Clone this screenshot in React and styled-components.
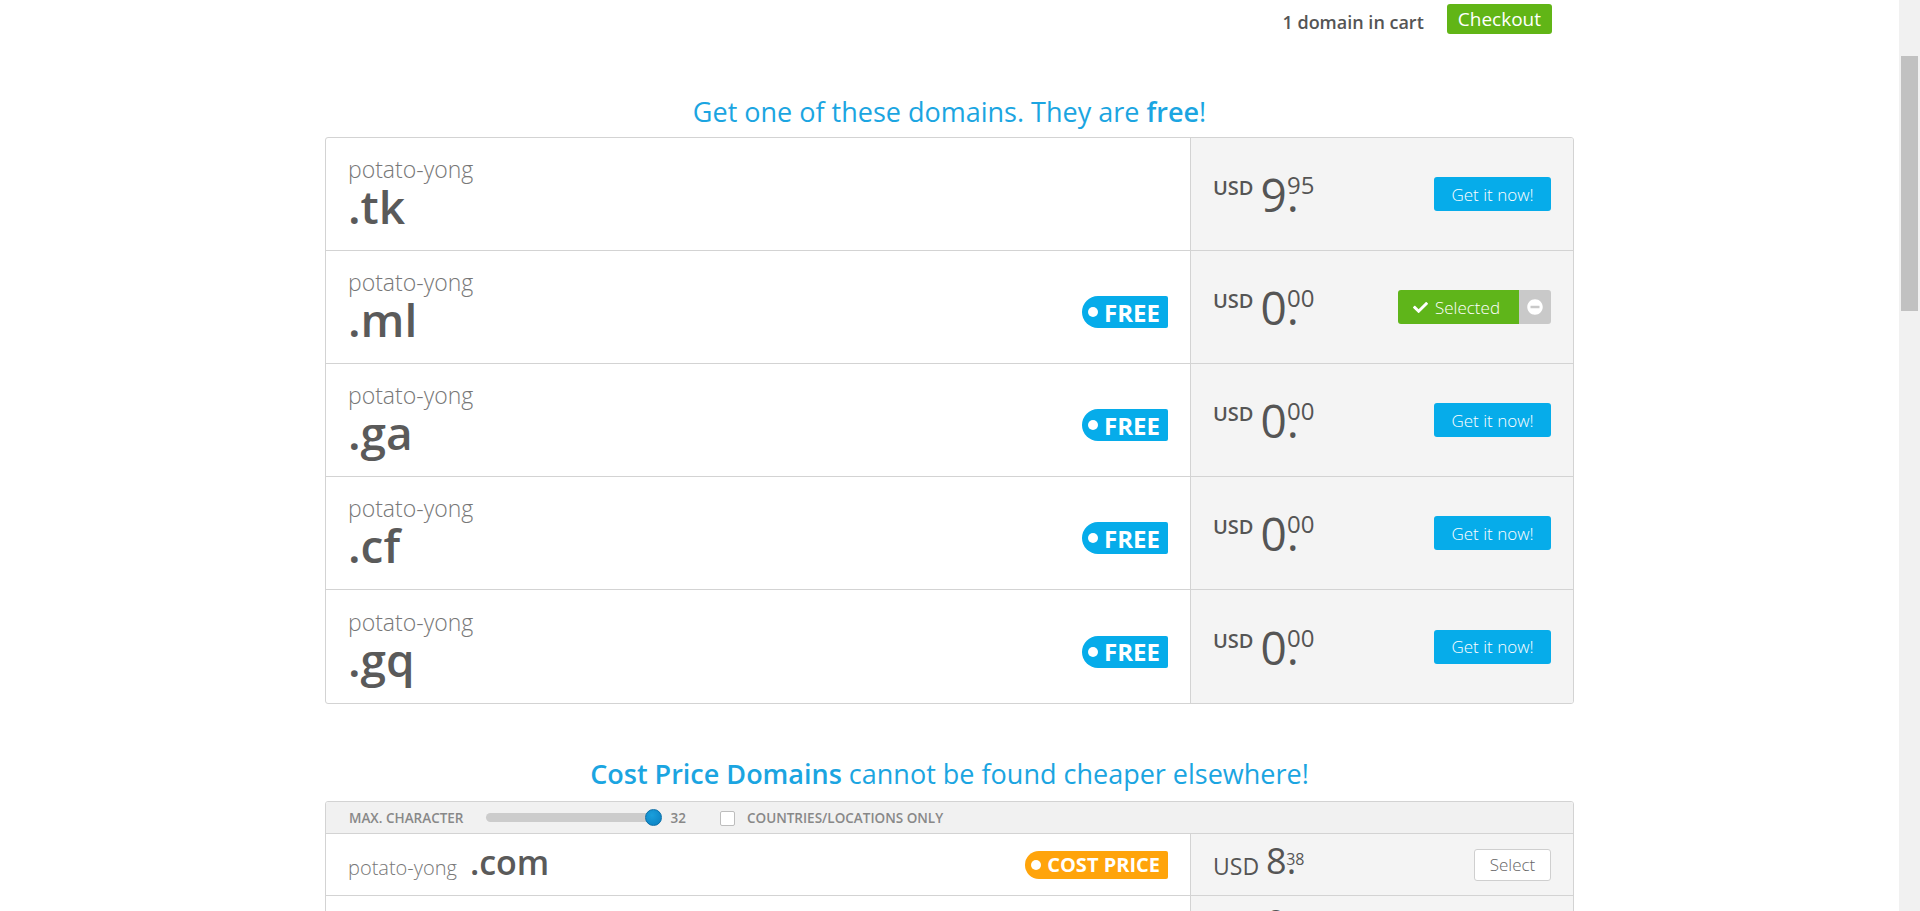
import React from 'react';
import styled, { createGlobalStyle } from 'styled-components';
import { FaCheck, FaMinusCircle } from 'react-icons/fa';

const GlobalStyle = createGlobalStyle`
  html, body { margin: 0; padding: 0; background: #fff; overflow: hidden; }
  body { font-family: "Open Sans", "Liberation Sans", sans-serif; color: #555; }
  * { box-sizing: border-box; }
`;

const Page = styled.div`
  margin-right: 21px;
  height: 911px;
  overflow: hidden;
`;

const Container = styled.div`
  width: 1249px;
  margin: 0 auto;
`;

const CartBar = styled.div`
  display: flex;
  justify-content: flex-end;
  align-items: flex-start;
  gap: 23px;
  padding: 4px 22px 0 0;
`;

const CartText = styled.span`
  margin-top: 6px;
  font-size: 18px;
  line-height: 24px;
  font-weight: 600;
  color: #555;
`;

const CheckoutButton = styled.button`
  height: 30px;
  padding: 0 11px;
  border: none;
  border-radius: 3px;
  background: #61b516;
  color: #fff;
  font-family: inherit;
  font-size: 19px;
  line-height: 30px;
  font-weight: 400;
`;

const Heading = styled.h2`
  margin: ${p => p.$mt}px 0 ${p => p.$mb}px;
  text-align: center;
  font-size: 27px;
  line-height: 34px;
  font-weight: 400;
  color: #1ba5e1;
  b { font-weight: 600; }
`;

const Table = styled.div`
  border: 1px solid #d3d3d3;
  border-radius: 3px;
  overflow: hidden;
`;

const Row = styled.div`
  display: grid;
  grid-template-columns: 1fr 383px;
  min-height: ${p => p.$h}px;
  &:not(:last-child) { border-bottom: 1px solid #d3d3d3; }
`;

const LeftCell = styled.div`
  display: flex;
  align-items: center;
  justify-content: space-between;
  padding: ${p => p.$compact ? '0 22px 0 22px' : '2px 22px 0 22px'};
`;

const RightCell = styled.div`
  display: flex;
  align-items: center;
  justify-content: space-between;
  background: #f4f4f4;
  border-left: 1px solid #d3d3d3;
  padding: 0 22px 0 22px;
`;

const NameBlock = styled.div`
  display: flex;
  flex-direction: column;
`;

const NameInline = styled.div`
  display: flex;
  align-items: baseline;
  gap: 13px;
  margin-bottom: 6px;
`;

const Sld = styled.span`
  font-size: ${p => p.$small ? 20 : 23}px;
  line-height: 22px;
  font-weight: 300;
  color: #777;
`;

const Tld = styled.span`
  font-size: ${p => p.$small ? 34 : 46}px;
  line-height: ${p => p.$small ? 34 : 52}px;
  font-weight: 600;
  color: #5a5a5a;
`;

const Badge = styled.span`
  display: inline-flex;
  align-items: center;
  height: ${p => p.$h}px;
  margin-top: ${p => p.$mt}px;
  padding: 0 8px 0 6px;
  border-radius: ${p => p.$h / 2}px 2px 2px ${p => p.$h / 2}px;
  background: ${p => p.$color};
  color: #fff;
  font-size: ${p => p.$fs}px;
  font-weight: 700;
  gap: 6px;
`;

const BadgeDot = styled.span`
  width: 10px;
  height: 10px;
  border-radius: 50%;
  background: #fff;
`;

const PriceBox = styled.div`
  display: flex;
  align-items: flex-start;
  margin-bottom: ${p => p.$small ? 8 : 0}px;
  color: #555;
`;

const Currency = styled.span`
  font-size: ${p => p.$small ? 23 : 20}px;
  line-height: ${p => p.$small ? 23 : 20}px;
  font-weight: ${p => p.$small ? 400 : 600};
  margin-top: ${p => p.$small ? 12 : 7}px;
  margin-right: ${p => p.$small ? 7 : 7}px;
`;

const Whole = styled.span`
  font-size: ${p => p.$small ? 36 : 46}px;
  line-height: ${p => p.$small ? 36 : 46}px;
  font-weight: 400;
`;

const Cents = styled.span`
  font-size: ${p => p.$small ? 16 : 24}px;
  line-height: ${p => p.$small ? 16 : 24}px;
  margin-top: ${p => p.$small ? 8 : 2}px;
  margin-left: ${p => p.$small ? -10 : -12}px;
  font-weight: 400;
`;

const BlueButton = styled.button`
  height: 34px;
  width: 117px;
  border: none;
  border-radius: 3px;
  background: #06acea;
  color: #fff;
  font-family: inherit;
  font-size: 17px;
  font-weight: 300;
`;

const SelectedGroup = styled.div`
  display: flex;
  height: 34px;
  border-radius: 3px;
  overflow: hidden;
`;

const SelectedMain = styled.span`
  display: flex;
  align-items: center;
  gap: 7px;
  width: 121px;
  padding-left: 15px;
  background: #5fb51a;
  color: #fff;
  font-size: 17px;
  font-weight: 300;
`;

const RemovePart = styled.span`
  display: flex;
  align-items: center;
  justify-content: center;
  width: 32px;
  background: #c9c9c9;
  color: #fff;
`;

const SelectButton = styled.button`
  height: 32px;
  width: 77px;
  border: 1px solid #cfcfcf;
  border-radius: 3px;
  background: #fff;
  color: #666;
  font-family: inherit;
  font-size: 17px;
  font-weight: 300;
`;

const FilterBar = styled.div`
  display: flex;
  align-items: center;
  height: 32px;
  padding-left: 23px;
  background: #f1f1f1;
  border-bottom: 1px solid #d3d3d3;
  font-size: 13.5px;
  font-weight: 600;
  color: #888;
  text-transform: uppercase;
`;

const SliderTrack = styled.div`
  position: relative;
  width: 175px;
  height: 9px;
  margin-left: 22px;
  border-radius: 5px;
  background: #cccccc;
`;

const SliderThumb = styled.span`
  position: absolute;
  top: -4px;
  left: 159px;
  width: 17px;
  height: 17px;
  border-radius: 50%;
  background: radial-gradient(circle at 40% 35%, #1a9fdc, #0a7fc0);
  border: 1px solid #0b6fa8;
`;

const SliderValue = styled.span`
  margin-left: 10px;
`;

const CheckBox = styled.span`
  width: 15px;
  height: 15px;
  margin: 2px 12px 0 34px;
  border: 1px solid #bdbdbd;
  border-radius: 2px;
  background: #fff;
`;

const ScrollTrack = styled.div`
  position: fixed;
  top: 0;
  right: 0;
  width: 21px;
  height: 100%;
  background: #f1f1f1;
`;

const ScrollThumb = styled.div`
  position: absolute;
  top: 56px;
  left: 2px;
  width: 17px;
  height: 255px;
  background: #c1c1c1;
`;

const freeDomains = [
  { tld: '.tk', whole: '9', cents: '95', free: false, state: 'get' },
  { tld: '.ml', whole: '0', cents: '00', free: true, state: 'selected' },
  { tld: '.ga', whole: '0', cents: '00', free: true, state: 'get' },
  { tld: '.cf', whole: '0', cents: '00', free: true, state: 'get' },
  { tld: '.gq', whole: '0', cents: '00', free: true, state: 'get' },
];

const costDomains = [
  { tld: '.com', whole: '8', cents: '38' },
  { tld: '.co', whole: '9', cents: '88' },
];

function Price({ whole, cents, small }) {
  return (
    <PriceBox $small={small}>
      <Currency $small={small}>USD</Currency>
      <Whole $small={small}>{whole}.</Whole>
      <Cents $small={small}>{cents}</Cents>
    </PriceBox>
  );
}

export default function App() {
  return (
    <>
      <GlobalStyle />
      <Page>
        <Container>
          <CartBar>
            <CartText>1 domain in cart</CartText>
            <CheckoutButton>Checkout</CheckoutButton>
          </CartBar>

          <Heading $mt={61} $mb={8}>
            Get one of these domains. They are <b>free</b>!
          </Heading>
          <Table>
            {freeDomains.map(d => (
              <Row key={d.tld} $h={113}>
                <LeftCell>
                  <NameBlock>
                    <Sld>potato-yong</Sld>
                    <Tld>{d.tld}</Tld>
                  </NameBlock>
                  {d.free && (
                    <Badge $color="#06acea" $h={32} $fs={24} $mt={8}>
                      <BadgeDot />FREE
                    </Badge>
                  )}
                </LeftCell>
                <RightCell>
                  <Price whole={d.whole} cents={d.cents} />
                  {d.state === 'selected' ? (
                    <SelectedGroup>
                      <SelectedMain><FaCheck size={15} />Selected</SelectedMain>
                      <RemovePart><FaMinusCircle size={16} /></RemovePart>
                    </SelectedGroup>
                  ) : (
                    <BlueButton>Get it now!</BlueButton>
                  )}
                </RightCell>
              </Row>
            ))}
          </Table>

          <Heading $mt={53} $mb={10}>
            <b>Cost Price Domains</b> cannot be found cheaper elsewhere!
          </Heading>
          <Table>
            <FilterBar>
              <span>Max. Character</span>
              <SliderTrack><SliderThumb /></SliderTrack>
              <SliderValue>32</SliderValue>
              <CheckBox />
              <span>Countries/Locations only</span>
            </FilterBar>
            {costDomains.map(d => (
              <Row key={d.tld} $h={62}>
                <LeftCell $compact>
                  <NameInline>
                    <Sld $small>potato-yong</Sld>
                    <Tld $small>{d.tld}</Tld>
                  </NameInline>
                  <Badge $color="#ffa40b" $h={28} $fs={20} $mt={0}>
                    <BadgeDot />COST PRICE
                  </Badge>
                </LeftCell>
                <RightCell>
                  <Price whole={d.whole} cents={d.cents} small />
                  <SelectButton>Select</SelectButton>
                </RightCell>
              </Row>
            ))}
          </Table>
        </Container>
      </Page>
      <ScrollTrack><ScrollThumb /></ScrollTrack>
    </>
  );
}
